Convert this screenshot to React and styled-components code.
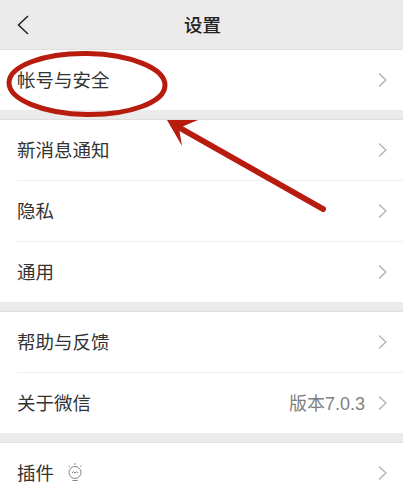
import React from "react"
import styled, { createGlobalStyle } from "styled-components"

const GlobalStyle = createGlobalStyle`
  html, body {
    margin: 0;
    padding: 0;
    background: #ebebeb;
  }
`

const Page = styled.div`
  position: relative;
  width: 403px;
  height: 500px;
  overflow: hidden;
  background: #ebebeb;
  font-family: "Liberation Sans", "Noto Sans CJK SC", sans-serif;
  color: #2b2b2b;
`

const Header = styled.header`
  display: flex;
  align-items: center;
  justify-content: center;
  position: relative;
  height: 49px;
  padding: 0 0 1px 2px;
  box-sizing: border-box;
  font-size: 18.5px;
  font-weight: 500;
  color: #222;
`

const BackIcon = styled.svg`
  position: absolute;
  left: 16px;
  top: 14px;
  width: 14px;
  height: 22px;
`

const Group = styled.section`
  margin-bottom: 9px;
  background: #fff;
  border-top: 1px solid #dfdfdf;
`

const Row = styled.div`
  display: flex;
  align-items: center;
  box-sizing: border-box;
  height: ${p => (p.$last ? "60px" : "61px")};
  margin-left: 17px;
  padding: 0 16px 0 0;
  font-size: 18.5px;
  border-bottom: ${p => (p.$last ? "none" : "1px solid #efefef")};
`

const Label = styled.span`
  flex: 1;
  display: flex;
  align-items: center;
  gap: 13px;
  padding-bottom: 3px;
  color: #333;
`

const Value = styled.span`
  margin-right: 13px;
  padding-bottom: 3px;
  font-size: 18px;
  color: #7f7f7f;
`

const Chevron = styled.svg`
  width: 9px;
  height: 16px;
`

const Annotation = styled.svg`
  position: absolute;
  left: 0;
  top: 0;
  width: 403px;
  height: 500px;
  pointer-events: none;
`

const ChevronIcon = () => (
  <Chevron viewBox="0 0 9 16" fill="none" stroke="#b4b4b4" strokeWidth="1.5">
    <path d="M1 1.5l7 6.5-7 6.5" />
  </Chevron>
)

const PluginIcon = () => (
  <svg width="16" height="20" viewBox="0 0 16 20" fill="none" stroke="#858585" strokeWidth="1">
    <circle cx="8" cy="10.5" r="6" />
    <path d="M5 11l1.5-1.3L8 11l1.5-1.3L11 11" />
    <path d="M8 1v1.8M1.6 3.6l1.2 1.2M14.4 3.6l-1.2 1.2M5.5 18.5h5" />
  </svg>
)

const groups = [
  [{ label: "帐号与安全" }],
  [{ label: "新消息通知" }, { label: "隐私" }, { label: "通用" }],
  [{ label: "帮助与反馈" }, { label: "关于微信", value: "版本7.0.3" }],
  [{ label: "插件", icon: true }],
]

const App = () => (
  <Page>
    <GlobalStyle />
    <Header>
      <BackIcon viewBox="0 0 14 22" fill="none" stroke="#222" strokeWidth="1.5">
        <path d="M12 2l-9.5 9 9.5 9" />
      </BackIcon>
      设置
    </Header>
    {groups.map((rows, i) => (
      <Group key={i}>
        {rows.map((row, j) => (
          <Row key={row.label} $last={j === rows.length - 1}>
            <Label>
              {row.label}
              {row.icon && <PluginIcon />}
            </Label>
            {row.value && <Value>{row.value}</Value>}
            <ChevronIcon />
          </Row>
        ))}
      </Group>
    ))}
    <Annotation viewBox="0 0 403 500">
      <ellipse cx="87" cy="84" rx="78" ry="30.5" fill="none" stroke="#b71c0f" strokeWidth="5" transform="rotate(1 87 84)" />
      <path d="M323 209L180 128" stroke="#b71c0f" strokeWidth="6" strokeLinecap="round" />
      <path d="M167 120L198 120L179 128L182 146Z" fill="#b71c0f" />
    </Annotation>
  </Page>
)

export default App
